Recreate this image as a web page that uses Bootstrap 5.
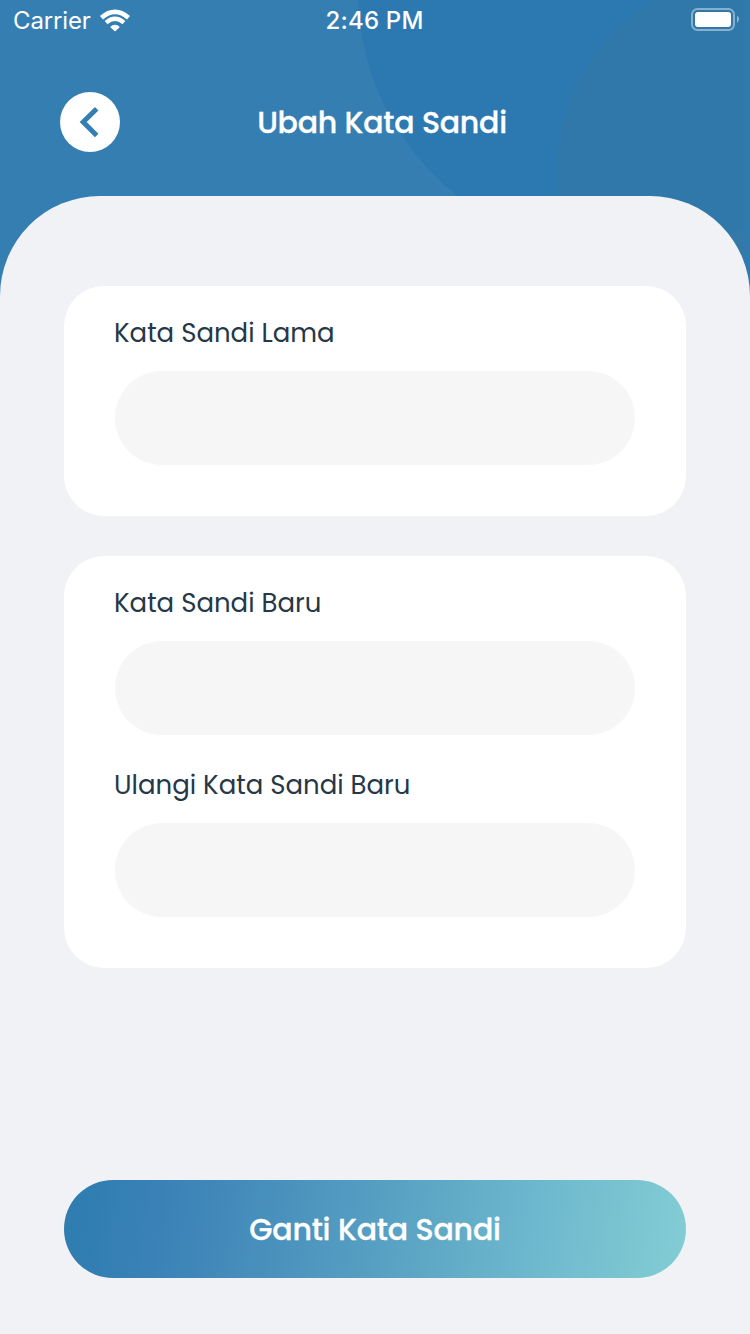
<!DOCTYPE html>
<html lang="id">
<head>
<meta charset="utf-8">
<meta name="viewport" content="width=device-width, initial-scale=1">
<title>Ubah Kata Sandi</title>
<link href="https://cdn.jsdelivr.net/npm/bootstrap@5.3.0/dist/css/bootstrap.min.css" rel="stylesheet">
<style>
body{font-family:Poppins,Inter,"Noto Sans",sans-serif;background:#f0f2f6;color:#263746;overflow:hidden}
.screen{height:1334px;background:#357eb2}
.backdrop{top:0;left:0;width:750px;height:300px;z-index:0}
.statusbar{height:40px;padding:1px 11px 0 13px;font:400 24px/40px Inter,sans-serif}
.clock{font-weight:500;letter-spacing:.2px;margin-left:-3px}
.carrier{letter-spacing:-.15px}
.battery{padding-bottom:4px}
.appbar{height:156px;padding:52px 60px 0}
.back{width:60px;height:60px}
.page-title{font-size:30px;font-weight:500;line-height:60px;letter-spacing:-.25px;padding:1px 0 0 14px;-webkit-text-stroke:.3px #fff}
.sheet{border-radius:100px 100px 0 0;background:#f0f2f6;padding:90px 64px 56px}
.panel{border:0;border-radius:40px;padding:25px 50px 50px}
.panel+.panel{margin-top:40px}
.form-label{font-size:26px;line-height:44px;margin:0 0 15px;display:block}
.field{height:96px;border:1px solid #fff;border-radius:48px;background:#f6f6f6;padding:0 36px;font-size:26px}
.second{margin-top:27px}
.submit{height:98px;border:0;border-radius:49px;color:#fff;font-size:30px;font-weight:500;letter-spacing:-.2px;-webkit-text-stroke:.3px #fff;background:linear-gradient(98deg,#307db2 4%,#3c83b7 18%,#569fc2 50%,#6cb7cd 74%,#83cdd4 100%)}
.submit:hover{color:#fff}
</style>
</head>
<body>
<main class="screen position-relative d-flex flex-column">
  <svg class="backdrop position-absolute" viewBox="0 0 750 300" aria-hidden="true">
    <rect width="750" height="300" fill="#357eb2"/>
    <circle cx="616" cy="-8" r="258" fill="#2c79b2"/>
    <path d="M744.5 0H655A198 198 0 0 0 557 172V300H744.5Z" fill="#3078aa"/>
    <path d="M744.5 0H750V300H744.5Z" fill="#2f7aae"/>
    <path d="M700 243Q724 238 744.5 229V300H700Z" fill="#3579a9"/>
  </svg>
  <div class="statusbar position-relative d-flex align-items-center text-white">
    <div class="col d-flex align-items-center"><span class="carrier">Carrier</span>
      <svg class="ms-2" width="32" height="24" viewBox="0 0 32 24" fill="none" aria-hidden="true">
        <path d="M2.5 8.7Q16-2.9 29.5 8.7" stroke="#fff" stroke-width="4.7"/>
        <path d="M7.1 13.6Q16 6 24.9 13.6" stroke="#fff" stroke-width="4.3"/>
        <path d="M11.1 17.9Q16 13.5 20.9 17.9L16 22.5Z" fill="#fff"/>
      </svg>
    </div>
    <span class="clock">2:46 PM</span>
    <div class="battery col text-end lh-1">
      <svg width="49" height="24" viewBox="0 0 49 24" aria-hidden="true">
        <rect x="2" y="2" width="42" height="21" rx="5.5" fill="none" stroke="#fff" stroke-opacity=".42" stroke-width="2"/>
        <rect x="5" y="5" width="36" height="15" rx="3" fill="#fff"/>
        <path d="M47 8.5Q49 9.5 49 12T47 16Z" fill="#fff" opacity=".45"/>
      </svg>
    </div>
  </div>
  <header class="appbar position-relative d-flex align-items-start text-white">
    <button class="back btn btn-light bg-white border-0 rounded-circle p-0 d-flex" type="button" aria-label="Kembali">
      <svg width="60" height="60" viewBox="0 0 60 60" fill="none" aria-hidden="true"><path d="M36.7 16.7 23.2 30.1 36.7 43.5" stroke="#357eb2" stroke-width="5"/></svg>
    </button>
    <h1 class="page-title flex-fill text-center m-0">Ubah Kata Sandi</h1>
    <span class="back"></span>
  </header>
  <form class="sheet position-relative d-flex flex-column flex-fill">
    <section class="panel card">
      <label class="form-label" for="old">Kata Sandi Lama</label>
      <input class="field form-control" id="old" type="password">
    </section>
    <section class="panel card">
      <label class="form-label" for="new">Kata Sandi Baru</label>
      <input class="field form-control" id="new" type="password">
      <label class="form-label second" for="repeat">Ulangi Kata Sandi Baru</label>
      <input class="field form-control" id="repeat" type="password">
    </section>
    <button class="submit btn w-100 mt-auto" type="button">Ganti Kata Sandi</button>
  </form>
</main>
<script src="https://cdn.jsdelivr.net/npm/bootstrap@5.3.0/dist/js/bootstrap.bundle.min.js"></script>
</body>
</html>
